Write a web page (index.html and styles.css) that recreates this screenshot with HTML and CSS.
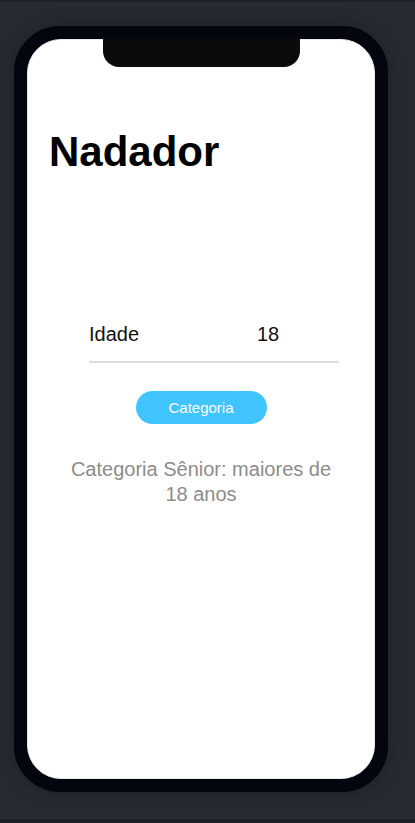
FILE: index.html
```html
<!DOCTYPE html>
<html lang="pt">
<head>
<meta charset="utf-8">
<title>Nadador</title>
<link rel="stylesheet" href="styles.css">
</head>
<body>
<div class="topbar"></div>
<div class="stage">
  <div class="phone">
    <div class="screen">
      <div class="notch"></div>
      <h1 class="title">Nadador</h1>
      <div class="field">
        <span class="label">Idade</span>
        <span class="value">18</span>
      </div>
      <div class="actions">
        <button class="btn">Categoria</button>
      </div>
      <p class="result">Categoria Sênior: maiores de 18 anos</p>
    </div>
  </div>
</div>
<div class="bottombar"></div>
</body>
</html>
```
FILE: styles.css
```css
html, body {
  margin: 0;
  padding: 0;
}
body {
  width: 415px;
  height: 823px;
  background: #262a32;
  font-family: "Liberation Sans", Arial, sans-serif;
  overflow: hidden;
  display: flex;
  flex-direction: column;
}
.topbar {
  height: 2px;
  background: #1d2027;
}
.stage {
  flex: 1;
  padding: 24px 0 0 14px;
}
.bottombar {
  height: 4px;
  background: #1c1f26;
}
.phone {
  width: 348px;
  height: 740px;
  border: 13px solid #03060f;
  border-radius: 46px;
  background: #03060f;
  box-shadow: 0 0 18px rgba(0, 0, 0, 0.25);
}
.screen {
  position: relative;
  height: 100%;
  box-sizing: border-box;
  background: #ffffff;
  border-radius: 34px;
  border: 1px solid #ebebeb;
  padding: 88px 0 0 0;
  display: flex;
  flex-direction: column;
}
.notch {
  position: absolute;
  top: -1px;
  left: 75px;
  width: 197px;
  height: 28px;
  background: #0a0b0d;
  border-radius: 0 0 16px 16px;
}
.title {
  margin: 0 0 0 21px;
  font-size: 42px;
  line-height: 48px;
  font-weight: bold;
  color: #000;
}
.field {
  margin: 146px 0 0 61px;
  width: 250px;
  display: flex;
  font-size: 20px;
  line-height: 24px;
  color: #111;
  padding-bottom: 15px;
  border-bottom: 2px solid #dedede;
}
.label {
  width: 168px;
}
.actions {
  display: flex;
  justify-content: center;
  margin-top: 28px;
}
.btn {
  width: 131px;
  height: 33px;
  border: none;
  border-radius: 17px;
  background: #40c4ff;
  color: #fff;
  font-family: "Liberation Sans", Arial, sans-serif;
  font-size: 15px;
  padding: 0;
}
.result {
  margin: 33px auto 0;
  width: 280px;
  text-align: center;
  font-size: 20px;
  line-height: 25px;
  color: #8c8c8c;
}
```
